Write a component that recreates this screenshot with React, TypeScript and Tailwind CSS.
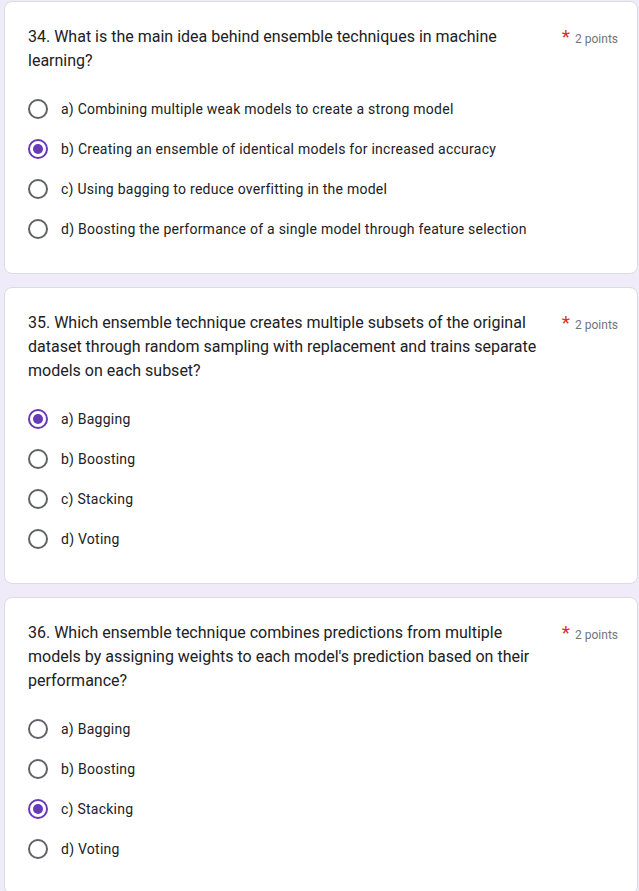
import React from 'react';

interface Question {
  title: string;
  options: string[];
  selected: number;
}

const QUESTIONS: Question[] = [
  {
    title: '34. What is the main idea behind ensemble techniques in machine learning?',
    options: [
      'a) Combining multiple weak models to create a strong model',
      'b) Creating an ensemble of identical models for increased accuracy',
      'c) Using bagging to reduce overfitting in the model',
      'd) Boosting the performance of a single model through feature selection',
    ],
    selected: 1,
  },
  {
    title:
      '35. Which ensemble technique creates multiple subsets of the original dataset through random sampling with replacement and trains separate models on each subset?',
    options: ['a) Bagging', 'b) Boosting', 'c) Stacking', 'd) Voting'],
    selected: 0,
  },
  {
    title:
      "36. Which ensemble technique combines predictions from multiple models by assigning weights to each model's prediction based on their performance?",
    options: ['a) Bagging', 'b) Boosting', 'c) Stacking', 'd) Voting'],
    selected: 2,
  },
];

function Radio({ checked }: { checked: boolean }) {
  return (
    <span
      className={`flex h-5 w-5 flex-shrink-0 items-center justify-center rounded-full border-2 ${
        checked ? 'border-[#673ab7]' : 'border-[#5f6368]'
      }`}
    >
      {checked && <span className="h-[10px] w-[10px] rounded-full bg-[#673ab7]" />}
    </span>
  );
}

function QuestionCard({ q }: { q: Question }) {
  return (
    <section className="mb-[13px] w-[634px] rounded-lg border border-[#dadce0] bg-white pb-6 pl-[23px] pr-[19px] pt-[23px]">
      <div className="flex items-start">
        <h2 className="w-[520px] text-[16px] leading-6 tracking-normal text-[#202124]">{q.title}</h2>
        <div className="ml-auto flex items-start gap-[5px]">
          <span className="pt-[2px] text-[19px] leading-5 text-[#d93025]">*</span>
          <span className="pt-[6px] text-[12px] leading-4 text-[#70757a]">2 points</span>
        </div>
      </div>
      <div className="mt-4 flex flex-col">
        {q.options.map((opt, i) => (
          <label key={opt} className="flex h-10 items-center gap-[13px]">
            <Radio checked={i === q.selected} />
            <span className="text-[14px] leading-5 tracking-[0.25px] text-[#202124]">{opt}</span>
          </label>
        ))}
      </div>
    </section>
  );
}

export default function App() {
  return (
    <div
      className="h-[891px] overflow-hidden bg-[#f0ebf8] pl-1 pt-px"
      style={{ fontFamily: 'Roboto, "Liberation Sans", Arial, sans-serif' }}
    >
      {QUESTIONS.map((q) => (
        <QuestionCard key={q.title} q={q} />
      ))}
    </div>
  );
}
